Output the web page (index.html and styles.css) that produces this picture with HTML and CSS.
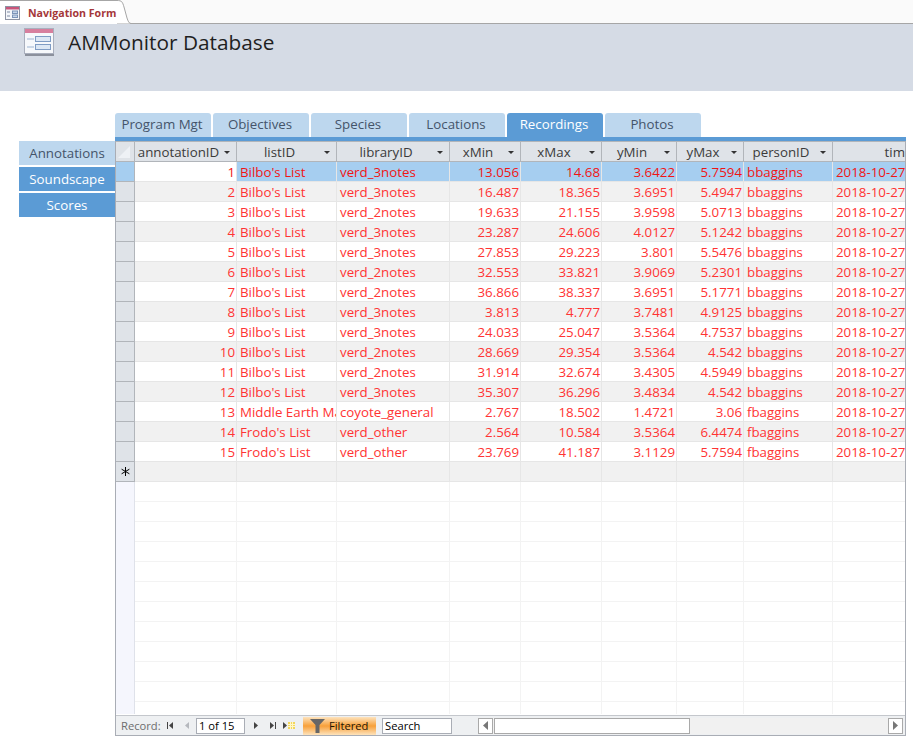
FILE: index.html
```html
<!DOCTYPE html>
<html>
<head>
  <title>Navigation Form</title>
  <link rel="stylesheet" href="styles.css">
</head>
<body>
  <!-- Document tab strip -->
  <div class="doc-strip">
    <div class="doc-tab">
      <svg class="doc-icon" width="15" height="14" viewBox="0 0 15 14">
        <rect x="0.5" y="0.5" width="14" height="13" fill="#f4f6fa" stroke="#8d93a3"/>
        <rect x="1" y="1" width="13" height="2.5" fill="#c9557a"/>
        <path d="M2 6h3M2 10h3" stroke="#7f8ba3"/>
        <rect x="7.5" y="5" width="5" height="2.5" fill="#c5d5ea" stroke="#7c94b8"/>
        <rect x="7.5" y="9" width="5" height="2.5" fill="#c5d5ea" stroke="#7c94b8"/>
      </svg>
      <span>Navigation Form</span>
    </div>
    <svg class="doc-curve" width="14" height="24" viewBox="0 0 14 24">
      <path d="M0 0.5C5 0.5 5.5 2 7 7L10 18C11 21 12 23.5 14 23.5H0Z" fill="#fff"/>
      <path d="M0 0.5C5 0.5 5.5 2 7 7L10 18C11 21 12 23.5 14 23.5" fill="none" stroke="#a6a6a6"/>
    </svg>
  </div>

  <!-- Form header -->
  <div class="form-header">
    <svg class="form-icon" width="32" height="28" viewBox="0 0 32 28">
      <rect x="1.5" y="0.5" width="29" height="25" fill="#f6f8fb" stroke="#a9afbd"/>
      <rect x="2" y="1" width="28" height="4" fill="#d77f9e"/>
      <path d="M4 11h7M4 19h7" stroke="#9db4d2"/>
      <rect x="12.5" y="8.5" width="15" height="5" fill="#dce7f4" stroke="#7f9cc4"/>
      <rect x="12.5" y="16.5" width="15" height="5" fill="#dce7f4" stroke="#7f9cc4"/>
      <rect x="2" y="26" width="29" height="2" fill="#8b909c"/>
    </svg>
    <div class="form-title">AMMonitor Database</div>
  </div>

  <!-- Top navigation tabs -->
  <div class="top-tabs">
    <div class="tab">Program Mgt</div>
    <div class="tab">Objectives</div>
    <div class="tab">Species</div>
    <div class="tab">Locations</div>
    <div class="tab active">Recordings</div>
    <div class="tab">Photos</div>
  </div>
  <div class="tab-line"></div>

  <div class="main">
    <!-- Side navigation -->
    <div class="side-tabs">
      <div class="side-tab current">Annotations</div>
      <div class="side-tab">Soundscape</div>
      <div class="side-tab">Scores</div>
    </div>

    <!-- Datasheet -->
    <div class="sheet">
      <div class="grid-wrap">
        <table class="grid">
          <colgroup>
            <col class="c-sel"><col class="c-id"><col class="c-list"><col class="c-lib"><col class="c-xmin"><col class="c-xmax"><col class="c-ymin"><col class="c-ymax"><col class="c-person"><col class="c-time">
          </colgroup>
          <thead>
            <tr>
              <th class="sel-head"><svg width="17" height="17" viewBox="0 0 17 17"><path d="M2 15L14 3V15Z" fill="#eef1f5"/></svg></th>
              <th class="drop">annotationID</th>
              <th class="drop">listID</th>
              <th class="drop">libraryID</th>
              <th class="drop">xMin</th>
              <th class="drop">xMax</th>
              <th class="drop">yMin</th>
              <th class="drop">yMax</th>
              <th class="drop">personID</th>
              <th>timestamp</th>
            </tr>
          </thead>
          <tbody>
            <tr class="selected"><td class="sel"></td><td class="num id-cell">1</td><td>Bilbo's List</td><td>verd_3notes</td><td class="num">13.056</td><td class="num">14.68</td><td class="num">3.6422</td><td class="num">5.7594</td><td>bbaggins</td><td>2018-10-27</td></tr>
            <tr><td class="sel"></td><td class="num">2</td><td>Bilbo's List</td><td>verd_3notes</td><td class="num">16.487</td><td class="num">18.365</td><td class="num">3.6951</td><td class="num">5.4947</td><td>bbaggins</td><td>2018-10-27</td></tr>
            <tr><td class="sel"></td><td class="num">3</td><td>Bilbo's List</td><td>verd_2notes</td><td class="num">19.633</td><td class="num">21.155</td><td class="num">3.9598</td><td class="num">5.0713</td><td>bbaggins</td><td>2018-10-27</td></tr>
            <tr><td class="sel"></td><td class="num">4</td><td>Bilbo's List</td><td>verd_3notes</td><td class="num">23.287</td><td class="num">24.606</td><td class="num">4.0127</td><td class="num">5.1242</td><td>bbaggins</td><td>2018-10-27</td></tr>
            <tr><td class="sel"></td><td class="num">5</td><td>Bilbo's List</td><td>verd_3notes</td><td class="num">27.853</td><td class="num">29.223</td><td class="num">3.801</td><td class="num">5.5476</td><td>bbaggins</td><td>2018-10-27</td></tr>
            <tr><td class="sel"></td><td class="num">6</td><td>Bilbo's List</td><td>verd_2notes</td><td class="num">32.553</td><td class="num">33.821</td><td class="num">3.9069</td><td class="num">5.2301</td><td>bbaggins</td><td>2018-10-27</td></tr>
            <tr><td class="sel"></td><td class="num">7</td><td>Bilbo's List</td><td>verd_2notes</td><td class="num">36.866</td><td class="num">38.337</td><td class="num">3.6951</td><td class="num">5.1771</td><td>bbaggins</td><td>2018-10-27</td></tr>
            <tr><td class="sel"></td><td class="num">8</td><td>Bilbo's List</td><td>verd_3notes</td><td class="num">3.813</td><td class="num">4.777</td><td class="num">3.7481</td><td class="num">4.9125</td><td>bbaggins</td><td>2018-10-27</td></tr>
            <tr><td class="sel"></td><td class="num">9</td><td>Bilbo's List</td><td>verd_3notes</td><td class="num">24.033</td><td class="num">25.047</td><td class="num">3.5364</td><td class="num">4.7537</td><td>bbaggins</td><td>2018-10-27</td></tr>
            <tr><td class="sel"></td><td class="num">10</td><td>Bilbo's List</td><td>verd_2notes</td><td class="num">28.669</td><td class="num">29.354</td><td class="num">3.5364</td><td class="num">4.542</td><td>bbaggins</td><td>2018-10-27</td></tr>
            <tr><td class="sel"></td><td class="num">11</td><td>Bilbo's List</td><td>verd_2notes</td><td class="num">31.914</td><td class="num">32.674</td><td class="num">3.4305</td><td class="num">4.5949</td><td>bbaggins</td><td>2018-10-27</td></tr>
            <tr><td class="sel"></td><td class="num">12</td><td>Bilbo's List</td><td>verd_3notes</td><td class="num">35.307</td><td class="num">36.296</td><td class="num">3.4834</td><td class="num">4.542</td><td>bbaggins</td><td>2018-10-27</td></tr>
            <tr><td class="sel"></td><td class="num">13</td><td>Middle Earth Ma</td><td>coyote_general</td><td class="num">2.767</td><td class="num">18.502</td><td class="num">1.4721</td><td class="num">3.06</td><td>fbaggins</td><td>2018-10-27</td></tr>
            <tr><td class="sel"></td><td class="num">14</td><td>Frodo's List</td><td>verd_other</td><td class="num">2.564</td><td class="num">10.584</td><td class="num">3.5364</td><td class="num">6.4474</td><td>fbaggins</td><td>2018-10-27</td></tr>
            <tr><td class="sel"></td><td class="num">15</td><td>Frodo's List</td><td>verd_other</td><td class="num">23.769</td><td class="num">41.187</td><td class="num">3.1129</td><td class="num">5.7594</td><td>fbaggins</td><td>2018-10-27</td></tr>
            <tr><td class="sel"><svg class="star" width="9" height="9" viewBox="0 0 9 9"><path d="M4.5 0V9M0.6 2.2L8.4 6.8M0.6 6.8L8.4 2.2" stroke="#000" stroke-width="1"/></svg></td><td></td><td></td><td></td><td></td><td></td><td></td><td></td><td></td><td></td></tr>
          </tbody>
        </table>
        <!-- Empty lines under the last record -->
        <div class="blank-rows">
          <div class="blank-sel"></div>
          <div class="blank-col c-id"></div>
          <div class="blank-col c-list"></div>
          <div class="blank-col c-lib"></div>
          <div class="blank-col c-xmin"></div>
          <div class="blank-col c-xmax"></div>
          <div class="blank-col c-ymin"></div>
          <div class="blank-col c-ymax"></div>
          <div class="blank-col c-person"></div>
        </div>
      </div>

      <!-- Record navigation bar -->
      <div class="record-bar">
        <span class="rec-label">Record:</span>
        <svg class="rec-btns" width="30" height="11" viewBox="0 0 30 11">
          <path d="M1.5 2v7" stroke="#444"/><path d="M7 2v7L3 5.5Z" fill="#444"/>
          <path d="M23 2v7l-4-3.5Z" fill="#b5b8bd"/>
        </svg>
        <div class="rec-input">1 of 15</div>
        <svg class="rec-btns-right" width="50" height="11" viewBox="0 0 50 11">
          <path d="M4 2v7l4-3.5Z" fill="#444"/>
          <path d="M20 2v7l4-3.5Z" fill="#444"/><path d="M25.5 2v7" stroke="#444"/>
          <path d="M33 2v7l4-3.5Z" fill="#444"/>
          <rect x="38" y="2" width="7" height="7" fill="#f2d65c"/>
          <path d="M38 4.5h7M38 6.5h7M40.5 2v7M42.5 2v7" stroke="#fff6c8"/>
        </svg>
        <div class="filter-btn">
          <svg width="15" height="14" viewBox="0 0 15 14"><path d="M0 0H15L9.5 6V14H5.5V6Z" fill="#666"/></svg>
          <span>Filtered</span>
        </div>
        <div class="search-box">Search</div>
        <div class="h-scroll">
          <div class="scroll-btn"><svg width="5" height="9" viewBox="0 0 5 9"><path d="M5 0V9L0 4.5Z" fill="#777"/></svg></div>
          <div class="scroll-thumb"></div>
          <div class="scroll-track"></div>
          <div class="scroll-btn"><svg width="5" height="9" viewBox="0 0 5 9"><path d="M0 0V9L5 4.5Z" fill="#777"/></svg></div>
        </div>
      </div>
    </div>
  </div>
</body>
</html>
```

FILE: styles.css
```css
/* Page */
html, body {
  margin: 0;
  padding: 0;
}

body {
  width: 913px;
  height: 742px;
  overflow: hidden;
  background-color: #fff;
  font-family: "Open Sans", "Noto Sans", sans-serif;
  font-size: 13.3px;
  color: #44546a;
}

/* Document tab strip */
.doc-strip {
  height: 23px;
  background-color: #fafafa;
  border-bottom: 1px solid #a6a6a6;
  display: flex;
}

.doc-tab {
  width: 117px;
  height: 24px;
  padding-left: 5px;
  box-sizing: border-box;
  background-color: #fff;
  border-top: 1px solid #a6a6a6;
  display: flex;
  align-items: center;
  gap: 8px;
  font-size: 10.6px;
  font-weight: bold;
  color: #a4373a;
}

.doc-icon {
  flex: none;
}

.doc-curve {
  flex: none;
}

/* Form header band */
.form-header {
  height: 67px;
  background-color: #d5dbe5;
  display: flex;
  align-items: flex-start;
  padding-left: 23px;
  gap: 13px;
}

.form-icon {
  margin-top: 4px;
}

.form-title {
  font-size: 20.8px;
  line-height: 28px;
  margin-top: 4px;
  color: #1f1f1f;
}

/* Top tabs */
.top-tabs {
  display: flex;
  gap: 2px;
  height: 24px;
  margin: 22px 0 0 115px;
}

.tab {
  box-sizing: border-box;
  width: 96px;
  height: 24px;
  padding-right: 2px;
  background-color: #bdd7ee;
  border-radius: 3px 3px 0 0;
  text-align: center;
  line-height: 23px;
}

.tab.active {
  background-color: #5b9bd5;
  color: #fff;
}

.tab-line {
  height: 4px;
  margin-left: 115px;
  width: 791px;
  background-color: #5b9bd5;
}

/* Main area: side tabs and datasheet */
.main {
  display: flex;
  align-items: flex-start;
  padding-left: 19px;
}

.side-tabs {
  width: 96px;
  display: flex;
  flex-direction: column;
  gap: 2px;
}

.side-tab {
  height: 24px;
  background-color: #5b9bd5;
  color: #fff;
  text-align: center;
  line-height: 24px;
}

.side-tab.current {
  background-color: #bdd7ee;
  color: #44546a;
  line-height: 25px;
}

.sheet {
  width: 791px;
  height: 595px;
  box-sizing: border-box;
  border: 1px solid #a9adb5;
  border-top: none;
  display: flex;
  flex-direction: column;
  overflow: hidden;
}

/* Datasheet grid */
.grid-wrap {
  height: 574px;
  overflow: hidden;
  background-color: #fff;
}

.grid {
  border-collapse: separate;
  border-spacing: 0;
  table-layout: fixed;
  width: 888px;
}

.c-sel { width: 19px; }
.c-id { width: 102px; }
.c-list { width: 100px; }
.c-lib { width: 113px; }
.c-xmin { width: 71px; }
.c-xmax { width: 81px; }
.c-ymin { width: 75px; }
.c-ymax { width: 67px; }
.c-person { width: 89px; }
.c-time { width: 171px; }

.grid th {
  height: 21px;
  padding: 0;
  box-sizing: border-box;
  background-color: #dfe3e8;
  border-right: 1px solid #b1b5ba;
  border-top: 1px solid #b1b5ba;
  border-bottom: 1px solid #b1b5ba;
  font-weight: normal;
  text-align: center;
  white-space: nowrap;
  overflow: hidden;
  color: #3b3b3b;
  line-height: 18px;
  position: relative;
}

/* little dropdown arrow in the header cells */
.grid th.drop::after {
  content: "";
  position: absolute;
  right: 6px;
  top: 9px;
  border-left: 3.5px solid transparent;
  border-right: 3.5px solid transparent;
  border-top: 3px solid #333;
}

.grid th.drop {
  padding-right: 14px;
}

.sel-head svg {
  display: block;
}

.grid td {
  height: 20px;
  padding: 1px 3px 0 3px;
  box-sizing: border-box;
  border-right: 1px solid #e6e6e6;
  border-bottom: 1px solid #e6e6e6;
  white-space: nowrap;
  overflow: hidden;
  color: #ff3333;
  line-height: 18px;
  background-color: #fff;
}

.grid tbody tr:nth-child(even) td {
  background-color: #f1f1f1;
}

.grid td.num {
  text-align: right;
  padding-right: 1px;
}

.grid td.sel,
.grid tbody tr:nth-child(even) td.sel {
  background-color: #dfe3e8;
  border-right: 1px solid #b1b5ba;
  border-bottom: 1px solid #b1b5ba;
  padding: 0;
}

.grid tr.selected td {
  background-color: #a6cef0;
  color: #f01414;
}

.grid tr.selected td.id-cell {
  background-color: #fff;
}

.star {
  display: block;
  margin: 0 auto;
}

.blank-rows {
  height: 232px;
  display: flex;
  background-image: linear-gradient(to bottom, transparent 19px, #f3f3f3 19px);
  background-size: 100% 20px;
}

.blank-sel {
  box-sizing: border-box;
  width: 19px;
  flex: none;
  background-color: #f5f6fd;
  border-right: 1px solid #dfe2ea;
}

.blank-col {
  box-sizing: border-box;
  flex: none;
  border-right: 1px solid #f3f3f3;
}

/* Record navigation bar */
.record-bar {
  height: 20px;
  box-sizing: border-box;
  border-top: 1px solid #c4c7cc;
  background-color: #eef0f2;
  display: flex;
  align-items: center;
  font-size: 11.2px;
  color: #6d6d6d;
}

.rec-label {
  margin-left: 5px;
  width: 45px;
  flex: none;
}

.rec-btns {
  flex: none;
  width: 30px;
}

.rec-input,
.search-box {
  box-sizing: border-box;
  height: 16px;
  border: 1px solid #a9adb5;
  background-color: #fff;
  color: #000;
  line-height: 14px;
  padding-left: 2px;
}

.rec-input {
  width: 49px;
}

.rec-btns-right {
  flex: none;
  margin-left: 5px;
  width: 50px;
}

.filter-btn {
  box-sizing: border-box;
  width: 73px;
  height: 18px;
  margin-left: 3px;
  padding-left: 7px;
  display: flex;
  align-items: center;
  gap: 4px;
  background: linear-gradient(#fde3bd, #f7a03a 50%, #fde3bd);
  color: #1f1503;
}

.search-box {
  width: 70px;
  margin-left: 6px;
}

.h-scroll {
  margin-left: 26px;
  width: 425px;
  height: 16px;
  display: flex;
  background-color: #f1f1f1;
}

.scroll-btn {
  box-sizing: border-box;
  width: 15px;
  height: 16px;
  border: 1px solid #a9a9a9;
  background-color: #fff;
  display: flex;
  align-items: center;
  justify-content: center;
}

.scroll-thumb {
  box-sizing: border-box;
  width: 196px;
  height: 16px;
  margin-left: 1px;
  border: 1px solid #a9a9a9;
  background-color: #fff;
}

.scroll-track {
  flex: 1;
}
```
